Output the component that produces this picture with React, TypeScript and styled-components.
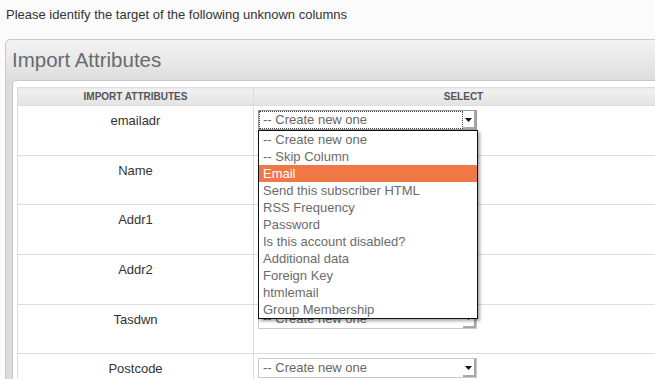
import React from 'react';
import styled, { createGlobalStyle } from 'styled-components';

const GlobalStyle = createGlobalStyle`
  html, body {
    margin: 0;
    padding: 0;
    background: #fbfbfb;
    overflow: hidden;
  }
  body {
    font-family: "Liberation Sans", Arial, sans-serif;
    font-size: 13px;
    color: #333;
  }
`;

const Page = styled.div`
  width: 700px;
  padding-top: 7px;
`;

const Intro = styled.p`
  margin: 0 0 17px 6px;
  line-height: 15px;
  color: #333;
`;

const Panel = styled.section`
  margin-left: 5px;
  border: 1px solid #cacaca;
  border-radius: 5px 0 0 0;
  background: #dcdcdc;
  padding: 0 0 0 6px;
`;

const PanelTitle = styled.h2`
  margin: 0 0 0 -6px;
  height: 40px;
  padding: 8px 0 0 6px;
  box-sizing: border-box;
  font-size: 20.5px;
  font-weight: normal;
  color: #666b70;
  background: linear-gradient(#f3f3f3, #dedede);
  border-radius: 5px 0 0 0;
`;

const Inner = styled.div`
  border: 1px solid #c8c8c8;
  border-radius: 4px 0 0 0;
  background: #fff;
  padding: 6px 0 0 4px;
`;

const Table = styled.table`
  border-collapse: collapse;
  width: 657px;
  border: 1px solid #ddd;
`;

const HeadCell = styled.th<{ $width?: number }>`
  height: 17px;
  padding: 0;
  width: ${(p) => (p.$width ? `${p.$width}px` : 'auto')};
  border: 1px solid #ddd;
  background: linear-gradient(#f1f1f1, #e3e3e3);
  font-size: 10px;
  font-weight: bold;
  color: #555;
  text-transform: uppercase;
  text-align: center;
  vertical-align: middle;
`;

const Cell = styled.td<{ $center?: boolean }>`
  height: 49.7px;
  padding: 4px 4px 0;
  border: 1px solid #ddd;
  vertical-align: top;
  text-align: ${(p) => (p.$center ? 'center' : 'left')};
  box-sizing: border-box;
`;

const Label = styled.div`
  padding-top: 3px;
  line-height: 15px;
  color: #333;
`;

const SelectWrap = styled.div`
  position: relative;
  width: 219px;
`;

const SelectBox = styled.div<{ $focused?: boolean }>`
  display: flex;
  height: 20px;
  box-sizing: border-box;
  border: 1px solid ${(p) => (p.$focused ? '#999' : '#c9c9c9')};
  background: #fff;
`;

const SelectText = styled.div<{ $focused?: boolean }>`
  flex: 1;
  padding-left: 4px;
  line-height: 17px;
  color: #666;
  outline: ${(p) => (p.$focused ? '1px dotted #444' : 'none')};
  outline-offset: -1px;
  white-space: nowrap;
  overflow: hidden;
`;

const Arrow = styled.div`
  width: 13px;
  display: flex;
  align-items: center;
  justify-content: center;
  background: #fff;
  box-shadow: inset -2px -2px 0 #a8a8a8;
  svg {
    margin: 0 2px 1px 0;
  }
`;

const DropList = styled.ul`
  position: absolute;
  top: 20px;
  left: 0;
  width: 220px;
  margin: 0;
  padding: 0;
  list-style: none;
  background: #fff;
  border: 1px solid #111;
  box-sizing: border-box;
  box-shadow: 2px 2px 3px rgba(0, 0, 0, 0.35);
  z-index: 5;
`;

const Option = styled.li<{ $active?: boolean }>`
  height: 17px;
  line-height: 17px;
  padding-left: 4px;
  color: ${(p) => (p.$active ? '#fff' : '#6b6b6b')};
  background: ${(p) => (p.$active ? '#f07846' : 'transparent')};
  white-space: nowrap;
`;

const options = [
  '-- Create new one',
  '-- Skip Column',
  'Email',
  'Send this subscriber HTML',
  'RSS Frequency',
  'Password',
  'Is this account disabled?',
  'Additional data',
  'Foreign Key',
  'htmlemail',
  'Group Membership',
];

const rows = ['emailadr', 'Name', 'Addr1', 'Addr2', 'Tasdwn', 'Postcode'];

const ArrowIcon = () => (
  <svg width="7" height="4" viewBox="0 0 7 4">
    <path d="M0 0h7L3.5 4z" fill="#111" />
  </svg>
);

const Select = ({ open }: { open?: boolean }) => (
  <SelectWrap>
    <SelectBox $focused={open}>
      <SelectText $focused={open}>-- Create new one</SelectText>
      <Arrow>
        <ArrowIcon />
      </Arrow>
    </SelectBox>
    {open && (
      <DropList>
        {options.map((o) => (
          <Option key={o} $active={o === 'Email'}>
            {o}
          </Option>
        ))}
      </DropList>
    )}
  </SelectWrap>
);

export default function App() {
  return (
    <Page>
      <GlobalStyle />
      <Intro>Please identify the target of the following unknown columns</Intro>
      <Panel>
        <PanelTitle>Import Attributes</PanelTitle>
        <Inner>
          <Table>
            <thead>
              <tr>
                <HeadCell $width={235}>Import Attributes</HeadCell>
                <HeadCell>Select</HeadCell>
              </tr>
            </thead>
            <tbody>
              {rows.map((r, i) => (
                <tr key={r}>
                  <Cell $center>
                    <Label>{r}</Label>
                  </Cell>
                  <Cell>
                    <Select open={i === 0} />
                  </Cell>
                </tr>
              ))}
            </tbody>
          </Table>
        </Inner>
      </Panel>
    </Page>
  );
}
